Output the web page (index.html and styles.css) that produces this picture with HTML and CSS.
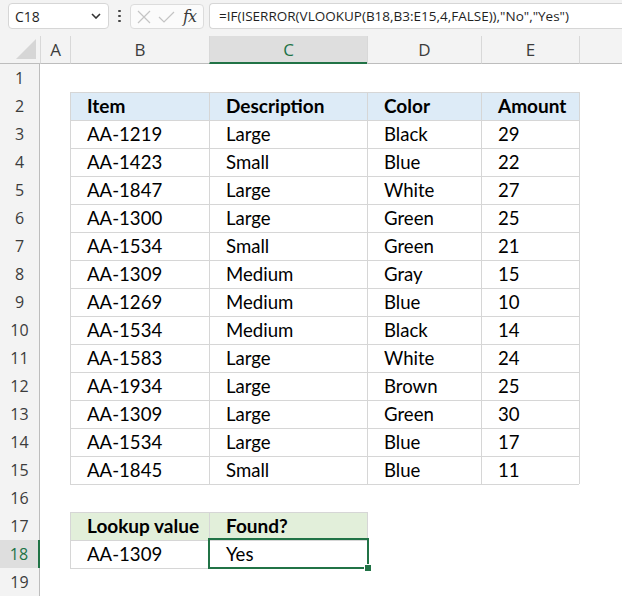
FILE: index.html
```html
<!DOCTYPE html>
<html>
<head>
<meta charset="utf-8">
<link rel="stylesheet" href="styles.css">
</head>
<body>
<div class="toolbar">
  <div class="namebox">
    <span class="nb-text">C18</span>
    <svg class="chev" width="10" height="6" viewBox="0 0 10 6"><path d="M1 1 L5 5 L9 1" fill="none" stroke="#333" stroke-width="1.6"/></svg>
  </div>
  <div class="dots"><i></i><i></i><i></i></div>
  <div class="fxbox">
    <svg width="14" height="14" viewBox="0 0 14 14"><path d="M1 1 L13 13 M13 1 L1 13" stroke="#c4c4c4" stroke-width="1.2" fill="none"/></svg>
    <svg width="17" height="12" viewBox="0 0 17 12"><path d="M1 6 L6 11 L16 1" stroke="#c4c4c4" stroke-width="1.2" fill="none"/></svg>
    <span class="fx">fx</span>
  </div>
  <div class="formula">=IF(ISERROR(VLOOKUP(B18,B3:E15,4,FALSE)),"No","Yes")</div>
</div>

<div class="sheet">
  <div class="row hdr">
    <div class="corner"><svg width="40" height="27" viewBox="0 0 40 27"><polygon points="36,3 36,23 16,23" fill="#d6d6d6"/></svg></div>
    <div class="ch">A</div><div class="ch">B</div><div class="ch sel">C</div><div class="ch">D</div><div class="ch">E</div><div class="ch">F</div>
  </div>

  <div class="row"><div class="rh">1</div><div></div><div></div><div></div><div></div><div></div><div></div></div>

  <div class="row"><div class="rh">2</div><div></div><div class="t th">Item</div><div class="t th">Description</div><div class="t th">Color</div><div class="t th">Amount</div><div class="tl"></div></div>
  <div class="row"><div class="rh">3</div><div></div><div class="t">AA-1219</div><div class="t">Large</div><div class="t">Black</div><div class="t">29</div><div class="tl"></div></div>
  <div class="row"><div class="rh">4</div><div></div><div class="t">AA-1423</div><div class="t">Small</div><div class="t">Blue</div><div class="t">22</div><div class="tl"></div></div>
  <div class="row"><div class="rh">5</div><div></div><div class="t">AA-1847</div><div class="t">Large</div><div class="t">White</div><div class="t">27</div><div class="tl"></div></div>
  <div class="row"><div class="rh">6</div><div></div><div class="t">AA-1300</div><div class="t">Large</div><div class="t">Green</div><div class="t">25</div><div class="tl"></div></div>
  <div class="row"><div class="rh">7</div><div></div><div class="t">AA-1534</div><div class="t">Small</div><div class="t">Green</div><div class="t">21</div><div class="tl"></div></div>
  <div class="row"><div class="rh">8</div><div></div><div class="t">AA-1309</div><div class="t">Medium</div><div class="t">Gray</div><div class="t">15</div><div class="tl"></div></div>
  <div class="row"><div class="rh">9</div><div></div><div class="t">AA-1269</div><div class="t">Medium</div><div class="t">Blue</div><div class="t">10</div><div class="tl"></div></div>
  <div class="row"><div class="rh">10</div><div></div><div class="t">AA-1534</div><div class="t">Medium</div><div class="t">Black</div><div class="t">14</div><div class="tl"></div></div>
  <div class="row"><div class="rh">11</div><div></div><div class="t">AA-1583</div><div class="t">Large</div><div class="t">White</div><div class="t">24</div><div class="tl"></div></div>
  <div class="row"><div class="rh">12</div><div></div><div class="t">AA-1934</div><div class="t">Large</div><div class="t">Brown</div><div class="t">25</div><div class="tl"></div></div>
  <div class="row"><div class="rh">13</div><div></div><div class="t">AA-1309</div><div class="t">Large</div><div class="t">Green</div><div class="t">30</div><div class="tl"></div></div>
  <div class="row"><div class="rh">14</div><div></div><div class="t">AA-1534</div><div class="t">Large</div><div class="t">Blue</div><div class="t">17</div><div class="tl"></div></div>
  <div class="row"><div class="rh">15</div><div></div><div class="t">AA-1845</div><div class="t">Small</div><div class="t">Blue</div><div class="t">11</div><div class="tl"></div></div>

  <div class="row"><div class="rh">16</div><div></div><div class="tt"></div><div class="tt"></div><div class="tt"></div><div class="tt"></div><div></div></div>

  <div class="row"><div class="rh">17</div><div></div><div class="t gh">Lookup value</div><div class="t gh">Found?</div><div class="tl"></div><div></div><div></div></div>
  <div class="row"><div class="rh rsel">18</div><div></div><div class="t">AA-1309</div><div class="t active">Yes<span class="selbox"></span><span class="handle"></span></div><div class="tl"></div><div></div><div></div></div>
  <div class="row"><div class="rh">19</div><div></div><div class="tt"></div><div class="tt"></div><div></div><div></div><div></div></div>
</div>
</body>
</html>
```

FILE: styles.css
```css
* { box-sizing: border-box; }
html, body { margin: 0; padding: 0; }
body {
  width: 622px;
  height: 596px;
  overflow: hidden;
  background: #ffffff;
  font-family: "Open Sans", "Noto Sans", sans-serif;
  color: #1f1f1f;
}

.toolbar {
  height: 36px;
  background: #f3f3f3;
  display: flex;
  align-items: flex-start;
  padding: 3px 0 0 8px;
}
.namebox {
  width: 101px;
  height: 26px;
  background: #ffffff;
  border: 1px solid #d6d6d6;
  border-radius: 4px;
  display: flex;
  align-items: center;
  justify-content: space-between;
  padding: 0 7px 0 6px;
  font-size: 14px;
}
.nb-text { color: #1f1f1f; }
.dots {
  width: 21px;
  height: 26px;
  display: flex;
  flex-direction: column;
  align-items: center;
  justify-content: center;
  gap: 2.5px;
}
.dots i {
  display: block;
  width: 2.5px;
  height: 2.5px;
  border-radius: 50%;
  background: #444;
}
.fxbox {
  width: 74px;
  height: 25px;
  margin-top: 1px;
  background: #fbfbfb;
  border: 1px solid #dcdcdc;
  border-radius: 4px;
  display: flex;
  align-items: center;
  padding: 0 0 0 6px;
  gap: 7px;
}
.fx {
  font-family: "DejaVu Serif", "Liberation Serif", serif;
  font-style: italic;
  font-size: 16px;
  color: #3a3a3a;
  letter-spacing: -1px;
  margin-left: 1px;
}
.formula {
  flex: 1;
  height: 26px;
  margin-left: 5px;
  background: #ffffff;
  border: 1px solid #d6d6d6;
  border-right: none;
  border-radius: 4px 0 0 4px;
  padding-left: 9px;
  font-size: 13.5px;
  line-height: 24px;
  white-space: nowrap;
  overflow: hidden;
  color: #1f1f1f;
}

.sheet { width: 622px; }
.row {
  display: grid;
  grid-template-columns: 40px 30px 139px 158px 114px 98px 92px;
  height: 28px;
}
.row > div {
  height: 28px;
  font-family: "Lato", "Noto Sans", sans-serif;
  font-size: 18.6px;
  line-height: 26px;
  padding-left: 16px;
  white-space: nowrap;
  color: #000;
}
.row.hdr { height: 28px; }
.row.hdr > div {
  background: #f3f3f3;
  border-bottom: 1px solid #bdbdbd;
  font-family: "Open Sans", "Noto Sans", sans-serif;
  font-size: 17px;
  line-height: 27px;
  padding: 0;
  text-align: center;
  color: #3c3c3c;
}
.row.hdr > .corner { padding: 0; }
.corner svg { display: block; }
.row.hdr > .ch { border-left: 1px solid #d8d8d8; }
.row.hdr > .ch.sel {
  background: #dedede;
  color: #217346;
  border-bottom: 2px solid #217346;
}

.row > .rh {
  background: #f3f3f3;
  border-right: 1px solid #bdbdbd;
  padding: 0;
  text-align: center;
  font-family: "Open Sans", "Noto Sans", sans-serif;
  font-size: 16px;
  line-height: 28px;
  color: #3c3c3c;
}
.row > .rh.rsel {
  background: #dedede;
  color: #217346;
  border-right: 2px solid #217346;
}

.row > .t {
  border-top: 1px solid #d6d6d6;
  border-left: 1px solid #d6d6d6;
}
.row > .tl { border-left: 1px solid #d6d6d6; }
.row > .tt { border-top: 1px solid #d6d6d6; }
.row > .th { background: #ddebf7; font-weight: 700; font-size: 19px; }
.row > .gh { background: #e2efda; font-weight: 700; font-size: 19px; }

.row > .active { position: relative; }
.selbox {
  position: absolute;
  left: -2px;
  top: -3px;
  right: -2px;
  bottom: -1px;
  border: 2px solid #217346;
}
.handle {
  position: absolute;
  right: -4px;
  bottom: -3px;
  width: 6px;
  height: 6px;
  background: #217346;
  outline: 1px solid #ffffff;
}
```
